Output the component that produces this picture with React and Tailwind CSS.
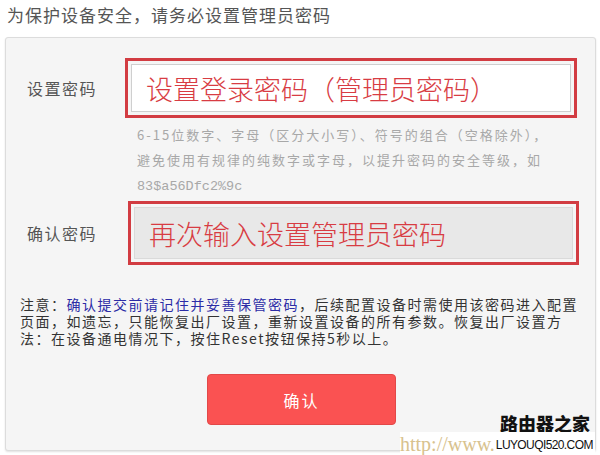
import React from "react";

const cjk = { fontFamily: '"Noto Sans CJK SC", "Liberation Sans", sans-serif' };

const PasswordRow = ({ label, text, inputClass, boxClass }) => (
  <div className="flex items-center">
    <div className="w-[119px] shrink-0 pl-[21px] text-[16px] leading-[20px] tracking-[1.5px] text-[#555]">
      {label}
    </div>
    <div className={`border-[3px] border-[#d23c42] p-[3px] ${boxClass}`}>
      <div
        className={`flex h-full items-center pl-[14px] text-[27px] font-light leading-none text-[#d83c43] ${inputClass}`}
      >
        {text}
      </div>
    </div>
  </div>
);

const App = () => {
  return (
    <div
      className="relative h-[455px] w-[600px] overflow-hidden bg-white"
      style={cjk}
    >
      <div className="pl-[7px] pt-[4px] text-[17px] leading-[22px] tracking-[1px] text-[#555]">
        为保护设备安全，请务必设置管理员密码
      </div>

      <div className="ml-[5px] mt-[11px] h-[414px] w-[591px] rounded-[3px] border border-[#dcdcdc] bg-[#f5f5f5] shadow-[0_1px_2px_rgba(0,0,0,0.12)]">
        <div className="pt-[20px]">
          <PasswordRow
            label="设置密码"
            text="设置登录密码（管理员密码）"
            boxClass="h-[60px] w-[452px]"
            inputClass="border border-[#cfcfcf] bg-white"
          />
        </div>

        <div className="mt-[4px] whitespace-nowrap pl-[131px] text-[13px] leading-[25px] tracking-[2px] text-[#a8a8a8]">
          6-15位数字、字母（区分大小写）、符号的组合（空格除外），
          <br />
          避免使用有规律的纯数字或字母，以提升密码的安全等级，如
          <br />
          <span
            className="text-[13.5px] tracking-normal"
            style={{ fontFamily: '"Liberation Mono", monospace' }}
          >
            83$a56Dfc2%9c
          </span>
        </div>

        <div className="mt-[2px]">
          <PasswordRow
            label="确认密码"
            text="再次输入设置管理员密码"
            boxClass="ml-[3px] h-[64px] w-[451px]"
            inputClass="border border-[#dadada] bg-[#e8e8e8]"
          />
        </div>

        <p className="mt-[31px] whitespace-nowrap pl-[14px] text-[14px] leading-[17px] tracking-[1.5px] text-[#333]">
          注意：<span className="text-[#2c2ca6]">确认提交前请记住并妥善保管密码</span>，后续配置设备时需使用该密码进入配置
          <br />
          页面，如遗忘，只能恢复出厂设置，重新设置设备的所有参数。恢复出厂设置方
          <br />
          法：在设备通电情况下，按住Reset按钮保持5秒以上。
        </p>

        <button className="ml-[201px] mt-[27px] flex h-[51px] w-[189px] items-center justify-center rounded-[4px] border border-[#e24848] bg-[#fa5252] text-[16px] tracking-[2px] text-white">
          确认
        </button>
      </div>

      <div className="absolute left-[500px] top-[413px] text-[18px] font-black leading-[20px] text-[#111]">
        路由器之家
      </div>
      <div className="absolute left-[400px] top-[432px] flex h-[23px] w-[195px] items-end bg-white">
        <span
          className="text-[20px] leading-[22px] text-[#d8c28e]"
          style={{ fontFamily: '"Liberation Serif", serif' }}
        >
          http://www.
        </span>
        <span
          className="mb-[3px] ml-[1px] text-[12px] leading-[14px] tracking-[-0.6px] text-[#111]"
          style={{ fontFamily: '"Liberation Sans", sans-serif' }}
        >
          LUYOUQI520.COM
        </span>
      </div>
    </div>
  );
};

export default App;
